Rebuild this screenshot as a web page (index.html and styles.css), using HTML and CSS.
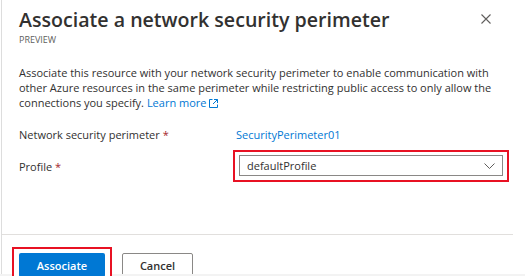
FILE: index.html
```html
<!DOCTYPE html>
<html lang="en">
<head>
  <meta charset="UTF-8" />
  <meta name="viewport" content="width=device-width, initial-scale=1.0"/>
  <title>Associate a network security perimeter</title>
  <link rel="stylesheet" href="styles.css">
</head>
<body>
  <div class="painel">
    <!-- Cabeçalho do painel -->
    <div class="cabecalho">
      <div>
        <h1>Associate a network security perimeter</h1>
        <p class="subtitulo">PREVIEW</p>
      </div>
      <button class="btn-fechar" aria-label="Close">
        <svg width="10" height="10" viewBox="0 0 10 10">
          <path d="M0.5 0.5 L9.5 9.5 M9.5 0.5 L0.5 9.5" stroke="#605e5c" stroke-width="1.1" fill="none"/>
        </svg>
      </button>
    </div>

    <!-- Texto de descrição -->
    <p class="descricao">
      Associate this resource with your network security perimeter to enable communication with
      other Azure resources in the same perimeter while restricting public access to only allow the
      connections you specify. <a href="#" class="link">Learn more</a>
      <svg class="icone-externo" width="9" height="9" viewBox="0 0 9 9">
        <path d="M3.5 0.5 H0.5 V8.5 H8.5 V5.5 M5 0.5 H8.5 V4 M8.5 0.5 L4 5" stroke="#0078d4" stroke-width="1" fill="none"/>
      </svg>
    </p>

    <!-- Campos do formulário -->
    <div class="formulario">
      <span class="rotulo">Network security perimeter <span class="obrigatorio">*</span></span>
      <a href="#" class="valor-link">SecurityPerimeter01</a>

      <span class="rotulo">Profile <span class="obrigatorio">*</span></span>
      <div class="destaque destaque-select">
        <div class="select">
          <span>defaultProfile</span>
          <svg width="11" height="6" viewBox="0 0 11 6">
            <path d="M0.5 0.5 L5.5 5.5 L10.5 0.5" stroke="#605e5c" stroke-width="1" fill="none"/>
          </svg>
        </div>
      </div>
    </div>

    <!-- Rodapé com botões -->
    <div class="rodape">
      <div class="destaque destaque-botao">
        <button class="btn-primario">Associate</button>
      </div>
      <button class="btn-secundario">Cancel</button>
    </div>
  </div>

  <div class="faixa-inferior"></div>
</body>
</html>
```

FILE: styles.css
```css
/* Estilo geral */
body {
  margin: 0;
  height: 276px;
  overflow: hidden;
  background-color: #ffffff;
  font-family: 'Open Sans', sans-serif;
  color: #323130;
}

/* Painel com borda à esquerda */
.painel {
  margin-left: 1px;
  width: 511px;
  height: 276px;
  border-left: 1px solid #dddddd;
  display: flex;
  flex-direction: column;
}

/* Cabeçalho */
.cabecalho {
  display: flex;
  justify-content: space-between;
  align-items: flex-start;
  padding: 6px 0 0 17px;
}

h1 {
  margin: 0;
  font-size: 19.6px;
  font-weight: 600;
  line-height: 27px;
  color: #323130;
}

.subtitulo {
  margin: 1px 0 0;
  font-size: 9px;
  line-height: 12px;
  color: #605e5c;
}

.btn-fechar {
  border: none;
  background: none;
  padding: 0;
  margin: 8px 22px 0 0;
  width: 10px;
  height: 10px;
  display: flex;
  cursor: pointer;
}

/* Descrição */
.descricao {
  margin: 19px 0 0;
  padding: 0 12px 0 17px;
  font-size: 11px;
  line-height: 15px;
}

.link {
  color: #0078d4;
  text-decoration: none;
}

.icone-externo {
  vertical-align: -1px;
}

/* Formulário */
.formulario {
  display: grid;
  grid-template-columns: 217px 273px;
  row-gap: 8px;
  align-items: center;
  margin-top: 17px;
  padding-left: 17px;
  font-size: 11px;
}

.obrigatorio {
  color: #a4262c;
}

.valor-link {
  color: #0078d4;
  text-decoration: none;
}

/* Caixa vermelha de destaque */
.destaque {
  border: 2px solid #e81123;
  padding: 3px 4px 4px;
  position: relative;
  z-index: 2;
  background: #ffffff;
}

.destaque-select {
  margin-left: -3px;
}

.select {
  border: 1px solid #8a8886;
  height: 19px;
  display: flex;
  align-items: center;
  justify-content: space-between;
  padding: 0 7px 0 7px;
  font-size: 11px;
}

/* Rodapé */
.rodape {
  margin-top: auto;
  border-top: 1px solid #e1dfdd;
  padding: 12px 0 0 10px;
  height: 29px;
  display: flex;
  align-items: flex-start;
  gap: 10px;
}

.destaque-botao {
  padding: 4px 5px 4px 5px;
}

button {
  font-family: 'Open Sans', sans-serif;
  cursor: pointer;
}

.btn-primario {
  display: block;
  width: 86px;
  height: 24px;
  background-color: #0078d4;
  color: #ffffff;
  border: none;
  border-radius: 2px;
  font-size: 11px;
  font-weight: 600;
}

.btn-secundario {
  margin-top: 6px;
  width: 71px;
  height: 24px;
  background-color: #ffffff;
  color: #323130;
  border: 1px solid #8a8886;
  border-radius: 2px;
  font-size: 11px;
  font-weight: 600;
}

/* Faixa cinza no fim da imagem */
.faixa-inferior {
  position: absolute;
  left: 0;
  right: 0;
  bottom: 0;
  height: 2px;
  background-color: #f3f3f3;
  z-index: 1;
}
```
